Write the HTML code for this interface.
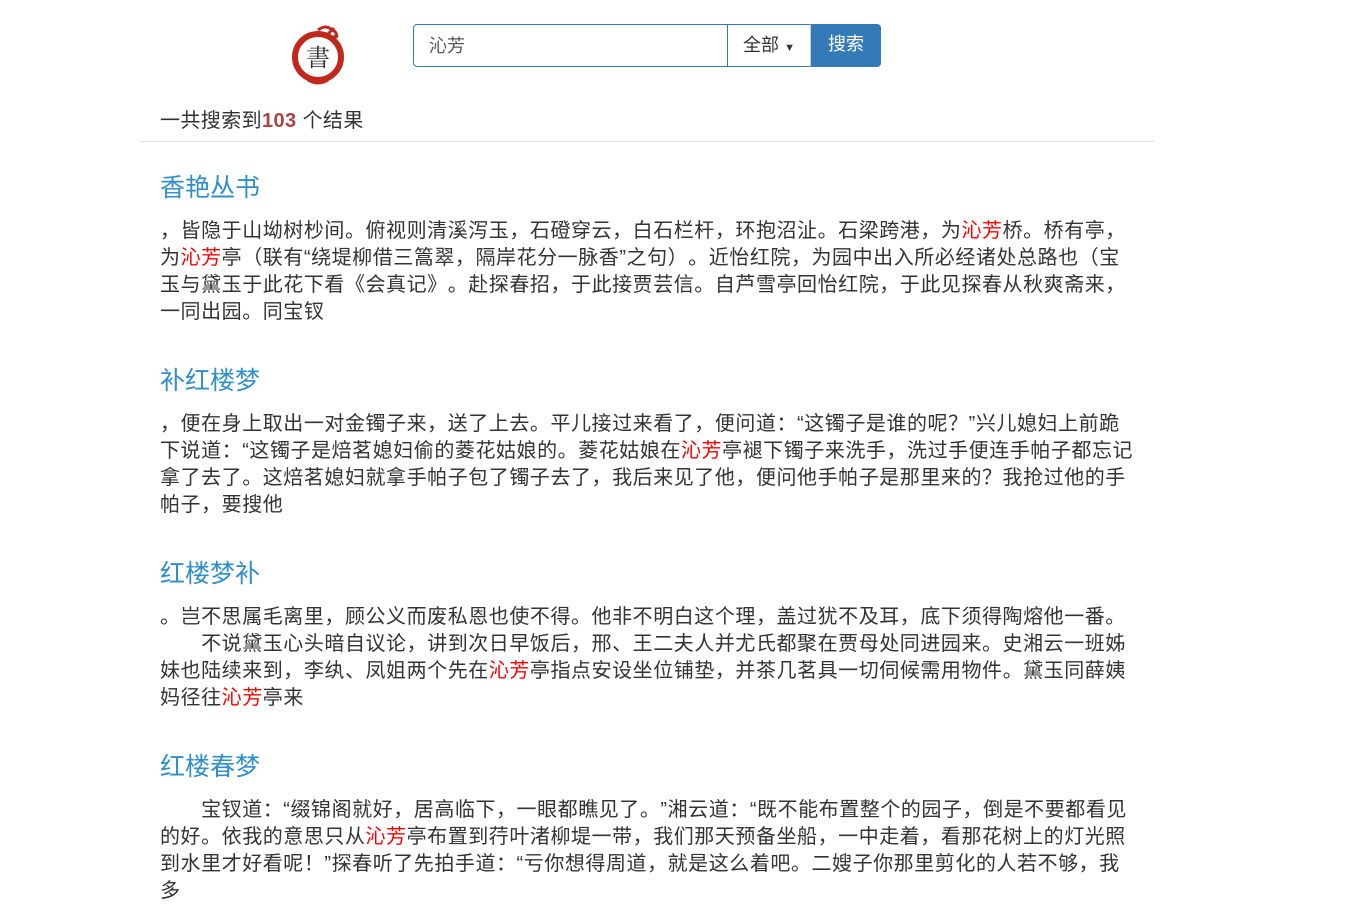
<!DOCTYPE html>
<html><head><meta charset="utf-8"><style>
body{margin:0;background:#fff;font-family:"Liberation Sans","Noto Sans CJK SC",sans-serif;color:#333;}
.wrap{position:relative;width:1358px;height:909px;overflow:hidden}
.search{position:absolute;left:413px;top:24px;height:43px;display:flex}
.inp{width:298px;height:41px;border:1px solid #337ab7;border-radius:4px 0 0 4px;font-size:18px;line-height:43px;padding-left:15px;color:#555}
.dd{width:82px;height:41px;border:1px solid #ccc;border-left:none;font-size:18px;line-height:41px;text-align:center;border-top-color:#337ab7;border-bottom-color:#337ab7}
.btn{width:70px;height:43px;background:#337ab7;color:#fff;font-size:18px;line-height:41px;text-align:center;border-radius:0 4px 4px 0}
.count{position:absolute;left:160px;top:104px;font-size:20px;letter-spacing:0.4px}
.count b{color:#a94442}
hr{position:absolute;left:140px;top:141px;width:1014px;margin:0;border:none;border-top:1px solid #ddd}
.item{position:absolute;left:160px;width:1100px}
.item h3{margin:0;font-weight:normal;font-size:25px;color:#2e8fca;height:40px;line-height:44px}
.item p{margin:0;margin-top:12px;font-size:20px;letter-spacing:0.55px;line-height:27px;white-space:nowrap;text-spacing-trim:space-all;font-feature-settings:"fwid"}
.r{color:#f00}
</style></head><body><div class="wrap">
<svg style="position:absolute;left:288px;top:24px" width="60" height="62" viewBox="0 0 60 62">
<circle cx="30" cy="33" r="23" fill="none" stroke="#c0281e" stroke-width="6"/>
<path d="M30 6 q8-6 14 0 q6 2 4 8 M40 10 l6-6 M44 14 l6 -3" stroke="#c0281e" stroke-width="3" fill="none"/>
<path d="M20 56 q10 6 20 0" stroke="#c0281e" stroke-width="3" fill="none"/>
<text x="30" y="42" font-size="24" text-anchor="middle" fill="#333" font-family="Noto Serif CJK SC,serif">書</text>
</svg>
<div class="search"><div class="inp">沁芳</div><div class="dd">全部 <span style="font-size:11px">▼</span></div><div class="btn">搜索</div></div>
<div class="count">一共搜索到<b>103</b> 个结果</div>
<hr>
<div class="item" style="top:166px"><h3>香艳丛书</h3><p>，皆隐于山坳树杪间。俯视则清溪泻玉，石磴穿云，白石栏杆，环抱沼沚。石梁跨港，为<span class="r">沁芳</span>桥。桥有亭，<br>为<span class="r">沁芳</span>亭（联有“绕堤柳借三篙翠，隔岸花分一脉香”之句）。近怡红院，为园中出入所必经诸处总路也（宝<br>玉与黛玉于此花下看《会真记》。赴探春招，于此接贾芸信。自芦雪亭回怡红院，于此见探春从秋爽斋来，<br>一同出园。同宝钗</p></div>
<div class="item" style="top:359px"><h3>补红楼梦</h3><p>，便在身上取出一对金镯子来，送了上去。平儿接过来看了，便问道：“这镯子是谁的呢？”兴儿媳妇上前跪<br>下说道：“这镯子是焙茗媳妇偷的菱花姑娘的。菱花姑娘在<span class="r">沁芳</span>亭褪下镯子来洗手，洗过手便连手帕子都忘记<br>拿了去了。这焙茗媳妇就拿手帕子包了镯子去了，我后来见了他，便问他手帕子是那里来的？我抢过他的手<br>帕子，要搜他</p></div>
<div class="item" style="top:552px"><h3>红楼梦补</h3><p>。岂不思属毛离里，顾公义而废私恩也使不得。他非不明白这个理，盖过犹不及耳，底下须得陶熔他一番。<br>　　不说黛玉心头暗自议论，讲到次日早饭后，邢、王二夫人并尤氏都聚在贾母处同进园来。史湘云一班姊<br>妹也陆续来到，李纨、凤姐两个先在<span class="r">沁芳</span>亭指点安设坐位铺垫，并茶几茗具一切伺候需用物件。黛玉同薛姨<br>妈径往<span class="r">沁芳</span>亭来</p></div>
<div class="item" style="top:745px"><h3>红楼春梦</h3><p>　　宝钗道：“缀锦阁就好，居高临下，一眼都瞧见了。”湘云道：“既不能布置整个的园子，倒是不要都看见<br>的好。依我的意思只从<span class="r">沁芳</span>亭布置到荇叶渚柳堤一带，我们那天预备坐船，一中走着，看那花树上的灯光照<br>到水里才好看呢！”探春听了先拍手道：“亏你想得周道，就是这么着吧。二嫂子你那里剪化的人若不够，我<br>多</p></div>
</div></body></html>
